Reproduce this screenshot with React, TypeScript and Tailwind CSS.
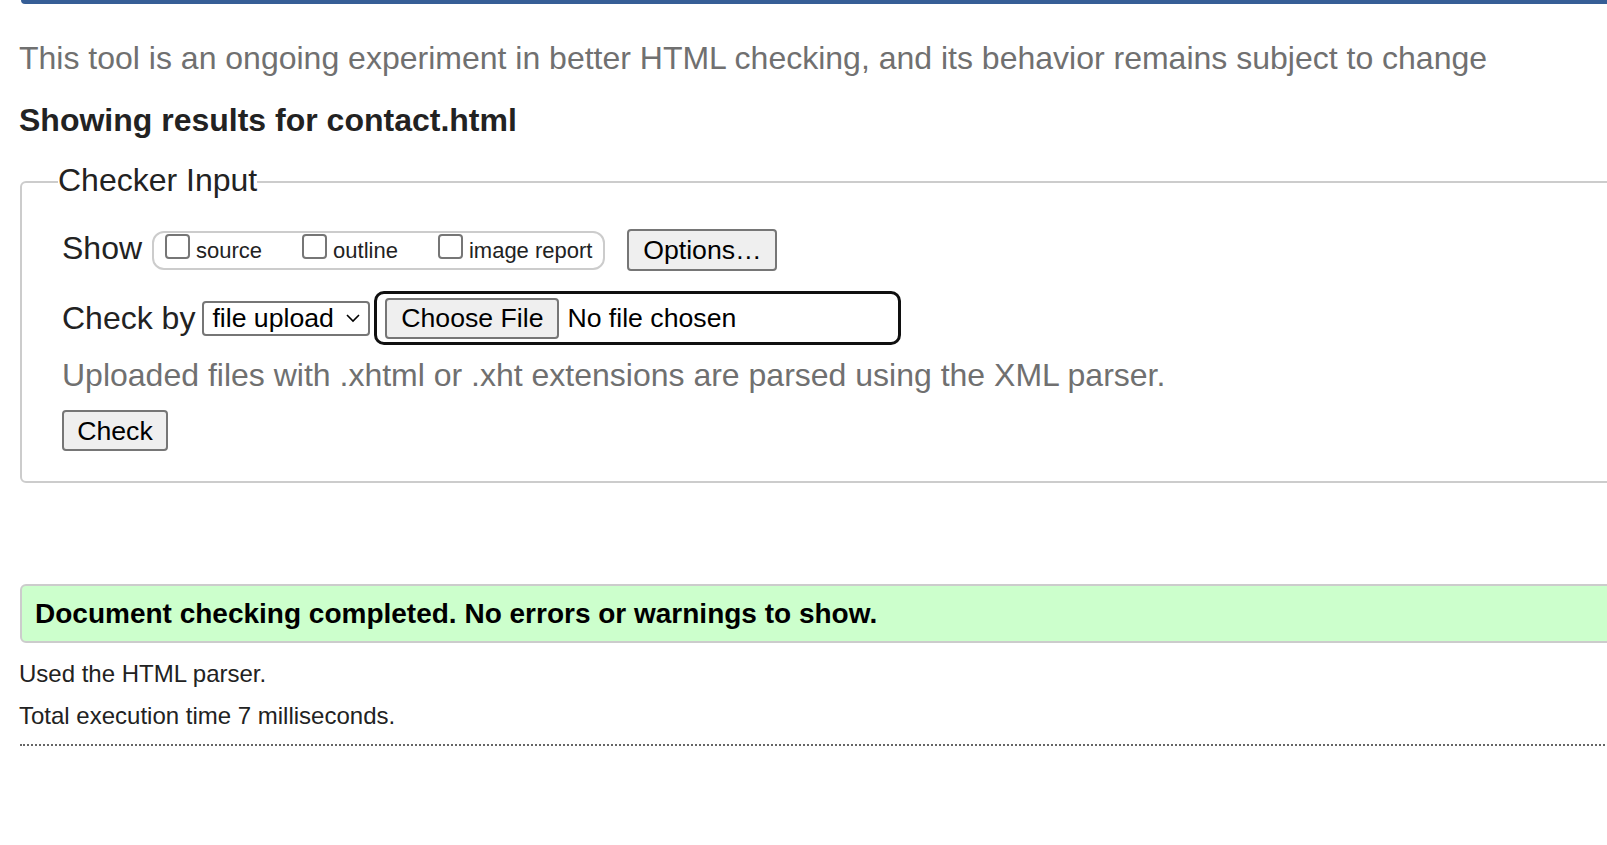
import React from "react";

function Box({ label }: { label: string }) {
  return (
    <span className="flex items-center">
      <span className="mb-[8px] inline-block h-[25px] w-[25px] rounded-[4px] border-2 border-[#767676] bg-white" />
      <span className="ml-[6px] mt-[2px] text-[22px] leading-[26px] text-[#222]">{label}</span>
    </span>
  );
}

export default function App() {
  const font = { fontFamily: '"Liberation Sans", Arial, sans-serif' };
  return (
    <div className="h-[845px] w-[1607px] overflow-hidden bg-white" style={font}>
      <div className="w-[1720px] pl-[20px]">
        <div className="ml-[1px] h-[4px] rounded-bl-[6px] bg-[#365e96]" />
        <p className="mt-[36px] -ml-[1px] text-[32px] leading-[37px] text-[#707070]">
          This tool is an ongoing experiment in better HTML checking, and its behavior remains subject to change
        </p>
        <h2 className="mt-[25px] -ml-[1px] text-[32px] font-bold leading-[37px] text-[#222]">
          Showing results for contact.html
        </h2>
        <fieldset className="mt-[23px] rounded-[6px] border-2 border-solid border-[#cccccc] pl-[40px] pb-[30px]">
          <legend className="-ml-[4px] pb-[3px] text-[32px] leading-[37px] text-[#222]">Checker Input</legend>
          <div className="mt-[27px] flex h-[42px] items-center">
            <span className="mb-[3px] text-[32px] leading-[37px] text-[#222]">Show</span>
            <div className="ml-[10px] flex h-[39px] items-center gap-[40px] rounded-[12px] border-2 border-[#cccccc] pl-[11px] pr-[11px]">
              <Box label="source" />
              <Box label="outline" />
              <Box label="image report" />
            </div>
            <button className="ml-[22px] flex h-[42px] w-[150px] items-center justify-center rounded-[4px] border-2 border-[#767676] bg-[#efefef] text-[26.67px] leading-[30px] text-black">
              Options…
            </button>
          </div>
          <div className="mt-[20px] flex h-[54px] items-center">
            <span className="text-[32px] leading-[37px] text-[#222]">Check by</span>
            <div className="ml-[7px] flex h-[35px] w-[168px] items-center justify-between rounded-[4px] border-2 border-[#767676] bg-white pl-[8px] pr-[7px]">
              <span className="text-[26.67px] leading-[30px] text-black">file upload</span>
              <svg width="16" height="10" viewBox="0 0 16 10" fill="none">
                <polyline points="2,2 8,8 14,2" stroke="#000" strokeWidth="1.6" />
              </svg>
            </div>
            <div className="ml-[4px] flex h-[54px] w-[527px] items-center rounded-[10px] border-[3px] border-[#101010] pl-[8px]">
              <button className="flex h-[41px] w-[174px] items-center justify-center rounded-[4px] border-2 border-[#767676] bg-[#efefef] text-[26.67px] leading-[30px] text-black">
                Choose File
              </button>
              <span className="ml-[8px] text-[26.67px] leading-[30px] text-black">No file chosen</span>
            </div>
          </div>
          <p className="mt-[12px] text-[32px] leading-[37px] text-[#707070]">
            Uploaded files with .xhtml or .xht extensions are parsed using the XML parser.
          </p>
          <button className="mt-[16px] flex h-[41px] w-[106px] items-center justify-center rounded-[4px] border-2 border-[#767676] bg-[#efefef] text-[26.67px] leading-[30px] text-black">
            Check
          </button>
        </fieldset>
        <div className="mt-[101px] flex h-[59px] items-center rounded-[6px] border-2 border-[#cccccc] bg-[#ccffcc] pl-[13px]">
          <span className="mt-[1px] text-[28px] font-bold leading-[32px] text-black">
            Document checking completed. No errors or warnings to show.
          </span>
        </div>
        <p className="mt-[17px] -ml-[1px] text-[24px] leading-[28px] text-[#222]">Used the HTML parser.</p>
        <p className="mt-[14px] -ml-[1px] text-[24px] leading-[28px] text-[#222]">Total execution time 7 milliseconds.</p>
        <div className="mt-[14px] border-t-2 border-dotted border-[#666]" />
      </div>
    </div>
  );
}
